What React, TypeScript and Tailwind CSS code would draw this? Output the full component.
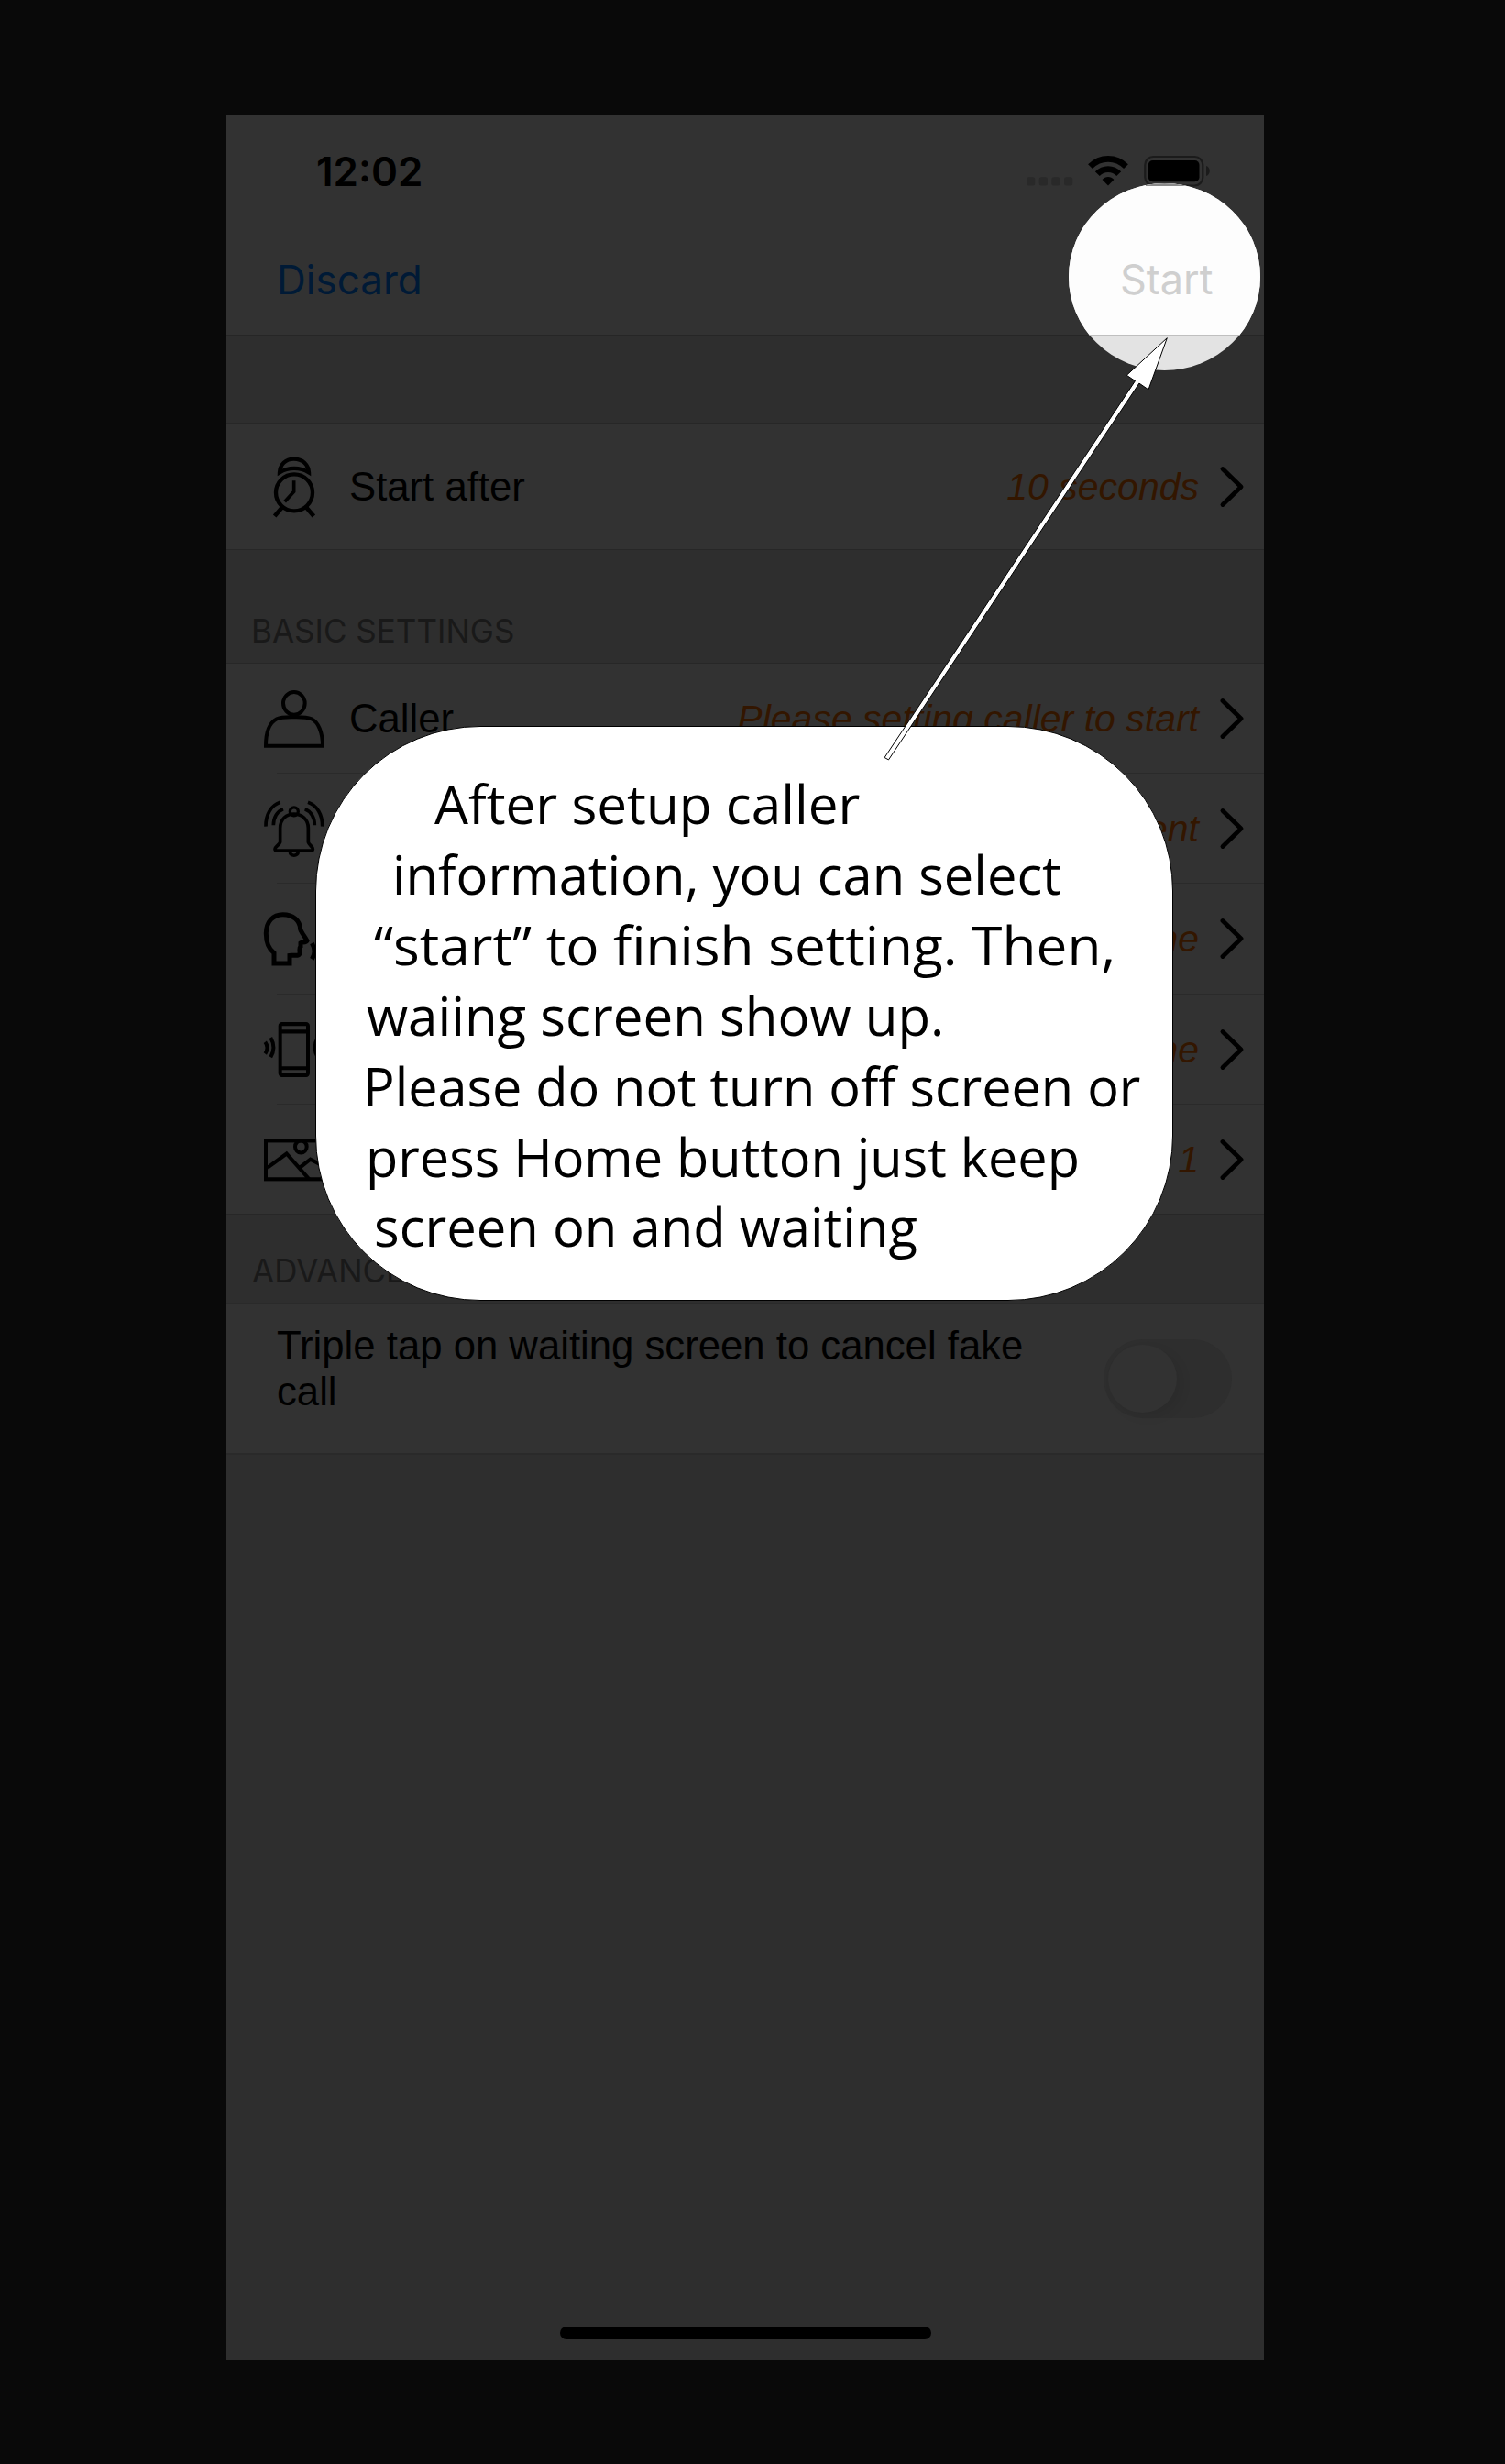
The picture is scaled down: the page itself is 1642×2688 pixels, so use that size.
import type { ReactNode } from "react";

const iconClass = "h-[66px] w-[66px] shrink-0 overflow-visible";

function AlarmIcon() {
  return (
    <svg className={iconClass} viewBox="144 143 198 198" fill="none" stroke="#000" strokeWidth="13">
      <circle cx="243" cy="261" r="60" />
      <path d="M195 195 C196 169 215 151 242 151 C270 151 290 169 291 195 C262 177 224 177 195 195 Z" />
      <path d="M242 222 V258 L212 291" strokeWidth="11" />
      <path d="M204 309 L179 338 M282 309 L307 338" strokeWidth="14" />
    </svg>
  );
}

function PersonIcon() {
  return (
    <svg className={iconClass} viewBox="144 91 198 198" fill="none" stroke="#000" strokeWidth="12">
      <ellipse cx="242.500" cy="140" rx="35.500" ry="37" />
      <path d="M150 279 H336 C336 235 322 202 300 191 C282 184 261 185 242 185 C224 185 202 184 186 191 C163 203 150 235 150 279 Z" />
    </svg>
  );
}

function BellIcon() {
  return (
    <svg className={iconClass} viewBox="144 451 198 198" fill="none" stroke="#000" strokeWidth="11">
      <circle cx="242.500" cy="494" r="13.500" strokeWidth="10" />
      <path d="M197 548 C197 519 218 502 242 502 C267 502 289 519 289 548 V594 C292 604 304 609 304 617 C304 621 301 622 298 622 H187 C183 622 180 620 180 617 C180 609 194 604 197 594 Z" />
      <path d="M229 625 C229 642 256 642 256 625" />
      <path d="M197 464 C167 474 149 505 150 543 M207 486 C187 493 175 514 175 539 M288 464 C318 474 336 505 335 543 M278 486 C298 493 310 514 310 539" />
    </svg>
  );
}

function SpeakIcon() {
  return (
    <svg className={iconClass} viewBox="144 812 198 198" fill="none" stroke="#000" strokeWidth="15">
      <path d="M177 992 V958 C163 947 151 926 151 895 C151 855 174 832 206 832 C239 832 262 852 263 880 C267 893 277 902 285 918 C282 925 268 922 264 925 V937 C256 944 266 957 258 964 C250 968 237 964 228 966 V992 Z" />
      <path d="M301 926 C312 944 312 961 301 978" />
      <path d="M323 912 C339 938 339 966 323 992" />
    </svg>
  );
}

function VibrateIcon() {
  return (
    <svg className={iconClass} viewBox="144 148 198 192" preserveAspectRatio="none" fill="none" stroke="#000" strokeWidth="12">
      <rect x="197" y="163" width="91" height="162" rx="6" />
      <path d="M197 187 H288 M197 303 H288" />
      <path d="M148 220 C157 232 157 244 148 257 M166 206 C179 228 179 246 166 268 M338 220 C329 232 329 244 338 257 M320 206 C307 228 307 246 320 268" />
    </svg>
  );
}

function PictureIcon() {
  return (
    <svg className={iconClass} viewBox="144 497 198 192" preserveAspectRatio="none" fill="none" stroke="#000" strokeWidth="12">
      <rect x="150" y="533" width="186" height="122" />
      <circle cx="265" cy="552" r="19" />
      <path d="M155 619 L218 574 L292 655 M263 617 L296 592 L336 612" />
    </svg>
  );
}

function Chevron() {
  return (
    <svg className="ml-[21px] h-[50px] w-[30px]" viewBox="0 0 30 50" fill="none" stroke="#000" strokeWidth="4.900" strokeLinecap="round" strokeLinejoin="round">
      <path d="M5 5.500 L25 25 L5 44.500" />
    </svg>
  );
}

function Row({ icon, label, value, className }: { icon: ReactNode; label?: string; value: string; className: string }) {
  return (
    <div className={`flex items-center pl-[41px] pr-[20px] ${className}`}>
      {icon}
      <span className="ml-[27px] whitespace-nowrap text-[43.7px] leading-[50px] text-black">{label}</span>
      <span className="ml-auto whitespace-nowrap text-[41px] italic leading-[50px] text-[#331600]">{value}</span>
      <Chevron />
    </div>
  );
}

const Divider = () => <div className="ml-[55px] h-px bg-[#2a2a2a]" />;

const calloutLines = [
  { text: "After setup caller", style: "ml-[129px] scale-x-[1.008]" },
  { text: "information, you can select", style: "ml-[83px] scale-x-[0.998]" },
  { text: "“start” to finish setting. Then,", style: "ml-[63px] scale-x-[1.04]" },
  { text: "waiing screen show up.", style: "ml-[55px] scale-x-[1.004]" },
  { text: "Please do not turn off screen or", style: "ml-[51px] scale-x-[0.993]" },
  { text: "press Home button just keep", style: "ml-[54px] scale-x-[0.994]" },
  { text: "screen on and waiting", style: "ml-[63px]" },
];

function StatusIcons() {
  return (
    <svg className="mt-[43px] h-[38px] w-[202px]" viewBox="1119 168 202 38">
      <g fill="#292929">
        <rect x="1120" y="193.300" width="9.300" height="9.300" rx="2.500" />
        <rect x="1133.700" y="193.300" width="9.300" height="9.300" rx="2.500" />
        <rect x="1147.300" y="193.300" width="9.300" height="9.300" rx="2.500" />
        <rect x="1161" y="193.300" width="9.300" height="9.300" rx="2.500" />
      </g>
      <g fill="none" stroke="#000" strokeWidth="6.800">
        <path d="M1189.500 181.700 C1200.500 170.600 1217.500 170.600 1228.500 181.700" />
        <path d="M1197.300 189.700 C1203.700 183 1214.300 183 1220.700 189.700" />
      </g>
      <path d="M1202.600 196 C1206 192 1212 192 1215.400 196 L1209 202.600 Z" />
      <rect x="1249.300" y="171" width="63" height="31.500" rx="9" fill="none" stroke="#1b1b1b" strokeWidth="2.200" />
      <rect x="1252.800" y="175" width="55.700" height="23.300" rx="5" />
      <path d="M1316 181 C1321 182.500 1321 190.500 1316 192 Z" fill="#1b1b1b" />
    </svg>
  );
}

export default function App() {
  return (
    <div className="relative h-[2688px] w-[1642px] overflow-hidden bg-[#090909] pl-[247px] pt-[125px] font-['Liberation_Sans',Arial,sans-serif]">
      <main className="flex h-[2449px] w-[1132px] flex-col overflow-hidden bg-[#2e2e2e]">
        <header className="flex h-[242px] shrink-0 flex-col border-b-2 border-[#262626] bg-[#323232] font-['Inter',sans-serif]">
          <div className="flex h-[120px] justify-between pl-[98px] pr-[58px]">
            <span className="mt-[37px] text-[44px] font-semibold leading-[50px] text-black">12:02</span>
            <StatusIcons />
          </div>
          <div className="pl-[55px] pt-[35px] text-[44px] leading-[50px] text-[#001a36]">Discard</div>
        </header>

        <div className="h-[94px] shrink-0" />
        <Row className="h-[139px] shrink-0 border-y border-[#272727] bg-[#323232]" icon={<AlarmIcon />} label="Start after" value="10 seconds" />

        <h2 className="h-[123px] shrink-0 pl-[27px] pt-[68px] font-['Inter',sans-serif] text-[35px] leading-[40px] text-[#191919]">BASIC SETTINGS</h2>
        <section className="shrink-0 border-y border-[#272727] bg-[#323232]">
          <Row className="h-[119px]" icon={<PersonIcon />} label="Caller" value="Please setting caller to start" />
          <Divider />
          <Row className="h-[119px]" icon={<BellIcon />} value="Silent" />
          <Divider />
          <Row className="h-[120px]" icon={<SpeakIcon />} value="None" />
          <Divider />
          <Row className="h-[119px]" icon={<VibrateIcon />} value="None" />
          <Divider />
          <Row className="h-[119px]" icon={<PictureIcon />} value="1" />
        </section>

        <h2 className="h-[96px] shrink-0 pl-[28px] pt-[41px] font-['Inter',sans-serif] text-[35px] leading-[40px] text-[#191919]">ADVANCED</h2>
        <section className="flex h-[166px] shrink-0 items-center justify-between border-y-2 border-[#2a2a2a] bg-[#323232] pl-[55px] pr-[35px]">
          <p className="mb-[22px] w-[840px] text-[43.7px] leading-[50px] text-black">Triple tap on waiting screen to cancel fake call</p>
          <div className="flex h-[86px] w-[140px] items-center rounded-full bg-[#2e2e2e] pl-[5px]">
            <div className="h-[74px] w-[75px] rounded-full bg-[#323232] shadow-[6px_5px_12px_rgba(0,0,0,0.07)]" />
          </div>
        </section>

        <div className="mx-auto mb-[22px] mt-auto h-[14px] w-[405px] rounded-full bg-black" />
      </main>

      <div className="absolute left-[1166px] top-[200px] flex h-[204px] w-[209px] flex-col overflow-hidden rounded-[50%] bg-[#e3e3e3]">
        <div className="h-[167px] border-b-2 border-[#bfbfbf] bg-[#fdfdfd] font-['Inter',sans-serif]">
          <div className="ml-[84px] h-[3px] w-[54px] bg-[#8a8a8a]" />
          <div className="ml-[56px] mt-[77px] text-[45px] leading-[50px] text-[#cfcfcf]">Start</div>
        </div>
      </div>

      <div className="absolute left-[344px] top-[792px] h-[627px] w-[936px] rounded-[180px] border border-black bg-white pt-[46px] font-['Open_Sans',sans-serif] text-[58px] leading-[76.9px] text-black">
        {calloutLines.map((line) => (
          <div key={line.text} className={`w-max origin-left whitespace-nowrap ${line.style}`}>{line.text}</div>
        ))}
      </div>

      <svg className="absolute left-[955px] top-[360px] h-[480px] w-[330px]" viewBox="955 360 330 480" fill="#fff" stroke="#000" strokeWidth="1">
        <path d="M1273.300 368.700 L1229.300 409.300 L1238.500 415.500 L965.100 826.500 L969.500 828.900 L1242.900 418.100 L1253 425 Z" />
      </svg>
    </div>
  );
}
